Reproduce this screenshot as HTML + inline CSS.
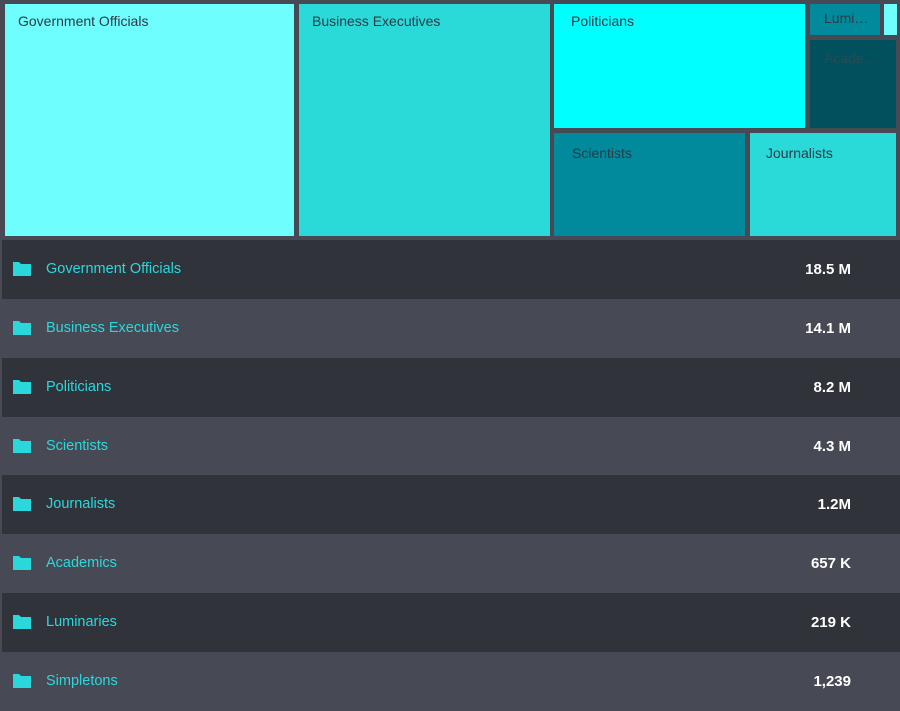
<!DOCTYPE html>
<html><head><style>
body{margin:0;width:900px;height:681px;overflow:hidden;background:#474a54;font-family:"Liberation Sans",sans-serif;position:relative}
.t{position:absolute;box-sizing:border-box;color:#2e3a45;font-size:14px;padding:9px 0 0 13px;white-space:nowrap;overflow:hidden}
.r{position:absolute;left:2px;width:898px;height:59px}
.r .n{position:absolute;left:44px;top:21px;color:#2ad8dc;font-size:14.5px}
.r .v{position:absolute;right:49px;top:21px;color:#fff;font-size:15px;font-weight:bold}
.r .f{position:absolute;left:11px;top:21px;width:18px;height:15px}
</style></head><body>
<div class="t" style="left:5px;top:4px;width:289px;height:232px;background:#6ffefe;padding-left:13px">Government Officials</div>
<div class="t" style="left:299px;top:4px;width:251px;height:232px;background:#2adad9">Business Executives</div>
<div class="t" style="left:554px;top:4px;width:251px;height:124px;background:#00ffff;padding-left:17px">Politicians</div>
<div class="t" style="left:810px;top:4px;width:70px;height:31px;background:#008a9c;padding:6px 0 0 14px">Lumi…</div>
<div class="t" style="left:884px;top:4px;width:12px;height:31px;background:#6ffefe"></div>
<div class="t" style="left:810px;top:40px;width:86px;height:88px;background:#00515d;padding:10px 0 0 14px;color:#2a4a55">Acade…</div>
<div class="t" style="left:554px;top:133px;width:191px;height:103px;background:#008a9c;padding:12px 0 0 18px">Scientists</div>
<div class="t" style="left:750px;top:133px;width:146px;height:103px;background:#2adad9;padding:12px 0 0 16px">Journalists</div>

<div class="r" style="top:240px;background:#31333b"><svg class="f" viewBox="0 0 18 15"><path d="M0 1h6l2 2h10v12H0z" fill="#2ad8dc"/></svg><span class="n">Government Officials</span><span class="v">18.5 M</span></div>
<div class="r" style="top:299px;background:#474a54"><svg class="f" viewBox="0 0 18 15"><path d="M0 1h6l2 2h10v12H0z" fill="#2ad8dc"/></svg><span class="n">Business Executives</span><span class="v">14.1 M</span></div>
<div class="r" style="top:358px;background:#31333b"><svg class="f" viewBox="0 0 18 15"><path d="M0 1h6l2 2h10v12H0z" fill="#2ad8dc"/></svg><span class="n">Politicians</span><span class="v">8.2 M</span></div>
<div class="r" style="top:417px;background:#474a54"><svg class="f" viewBox="0 0 18 15"><path d="M0 1h6l2 2h10v12H0z" fill="#2ad8dc"/></svg><span class="n">Scientists</span><span class="v">4.3 M</span></div>
<div class="r" style="top:475px;background:#31333b"><svg class="f" viewBox="0 0 18 15"><path d="M0 1h6l2 2h10v12H0z" fill="#2ad8dc"/></svg><span class="n">Journalists</span><span class="v">1.2M</span></div>
<div class="r" style="top:534px;background:#474a54"><svg class="f" viewBox="0 0 18 15"><path d="M0 1h6l2 2h10v12H0z" fill="#2ad8dc"/></svg><span class="n">Academics</span><span class="v">657 K</span></div>
<div class="r" style="top:593px;background:#31333b"><svg class="f" viewBox="0 0 18 15"><path d="M0 1h6l2 2h10v12H0z" fill="#2ad8dc"/></svg><span class="n">Luminaries</span><span class="v">219 K</span></div>
<div class="r" style="top:652px;background:#474a54"><svg class="f" viewBox="0 0 18 15"><path d="M0 1h6l2 2h10v12H0z" fill="#2ad8dc"/></svg><span class="n">Simpletons</span><span class="v">1,239</span></div>
</body></html>
